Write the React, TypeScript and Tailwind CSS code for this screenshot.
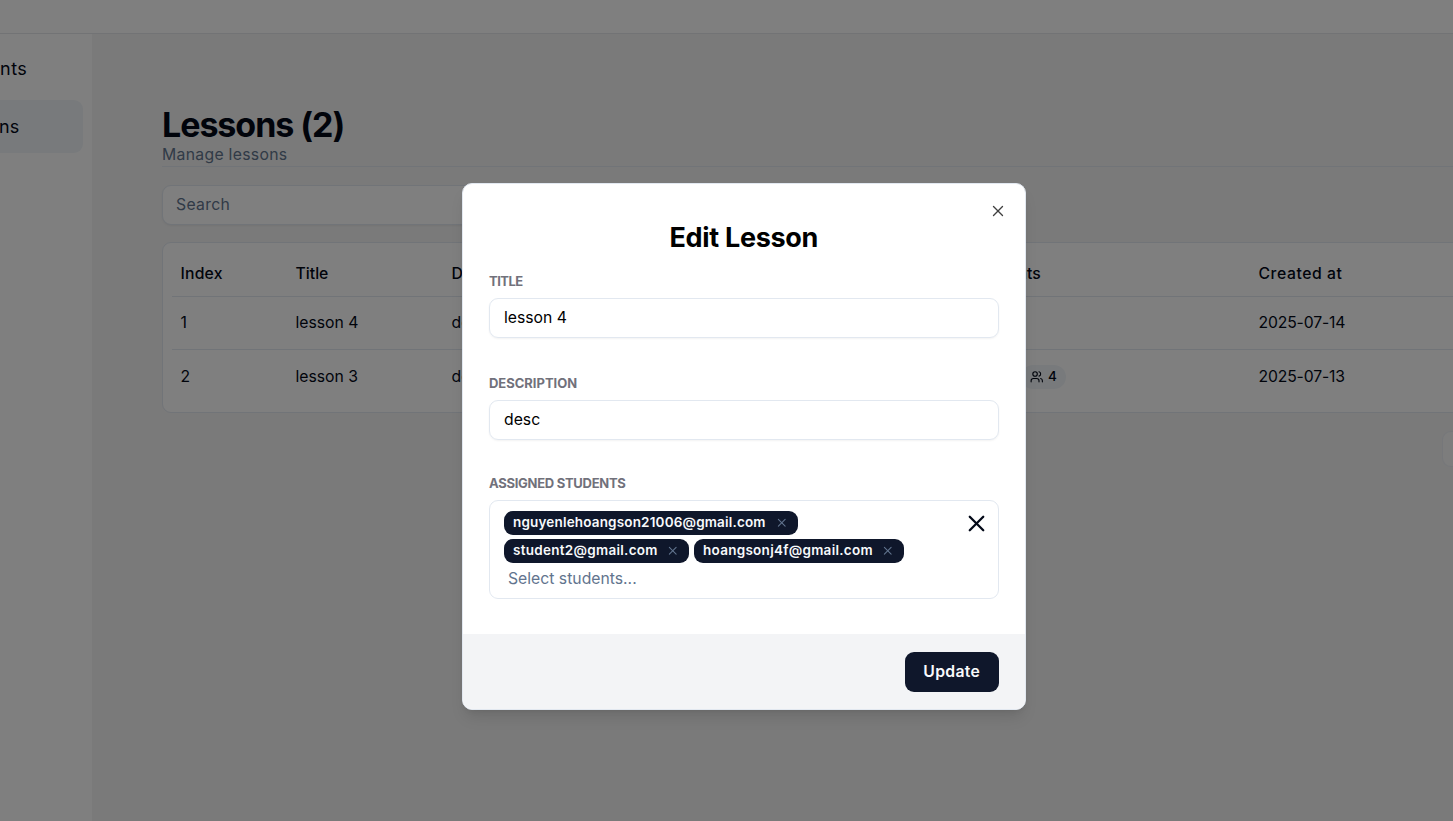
import { Users, X } from "lucide-react";

const columns = "grid grid-cols-[115px_156px_520px_287px_1fr] items-center pl-[8.5px]";

function Background() {
  return (
    <div className="flex h-full flex-col bg-white text-[#020817]">
      <header className="h-[34px] shrink-0 border-b border-gray-200 bg-white" />
      <div className="flex min-h-0 flex-1">
        <aside className="flex w-[92px] shrink-0 flex-col gap-[4.5px] bg-white pt-2 text-[18px]">
          <div className="flex h-[53px] w-[83px] items-center tracking-[0.5px]">nts</div>
          <div className="-ml-px flex h-[53px] w-[84px] items-center rounded-r-[9px] bg-slate-100">ns</div>
        </aside>
        <main className="min-w-0 flex-1 overflow-hidden bg-[#f4f4f4] pl-[70px] pt-[70px]">
          <div className="flex h-[63px] w-[1400px] flex-col border-b border-slate-200">
            <h1 className="h-[41px] text-[34px] font-bold leading-[41px] tracking-[-1.05px]">Lessons (2)</h1>
            <p className="text-[15.75px] leading-[20px] tracking-[0.3px] text-slate-500">Manage lessons</p>
          </div>
          <div className="mt-[18px] flex h-10 w-[422px] items-center rounded-[9px] border border-slate-200 bg-white pl-[13px] text-[15.75px] tracking-[0.3px] text-slate-500 shadow-xs">
            Search
          </div>
          <section className="mt-[17px] h-[171px] w-[1400px] rounded-[9px] border border-slate-200 bg-white px-[9px] pt-[9px] text-[15.75px]">
            <div className={`${columns} h-[45px] border-b border-slate-200 font-medium`}>
              <span className="tracking-[0.2px]">Index</span>
              <span>Title</span>
              <span>Desc</span>
              <span className="pl-[2px]">Students</span>
              <span className="tracking-[0.55px]">Created at</span>
            </div>
            <div className={`${columns} h-[53px] border-b border-slate-200`}>
              <span>1</span>
              <span>lesson 4</span>
              <span>desc</span>
              <span />
              <span className="tracking-[-0.15px]">2025-07-14</span>
            </div>
            <div className={`${columns} h-[54px]`}>
              <span>2</span>
              <span>lesson 3</span>
              <span>desc</span>
              <span className="flex pl-[49px]">
                <span className="flex h-6 items-center gap-[5px] rounded-full bg-slate-100 px-[9px] text-[13.5px] font-medium">
                  <Users size={13.5} />
                  <span className="-mt-px">4</span>
                </span>
              </span>
              <span className="tracking-[-0.15px]">2025-07-13</span>
            </div>
          </section>
          <div className="ml-[1280px] mt-[18px] h-[36px] w-24 rounded-[9px] border border-slate-200/60 bg-[#fafafa]" />
        </main>
      </div>
    </div>
  );
}

function Field({ label, value, labelClass }: { label: string; value: string; labelClass: string }) {
  return (
    <div className="flex h-[101.5px] flex-col">
      <label className={`h-[26px] text-[13px] font-bold leading-[18px] text-zinc-500 ${labelClass}`}>{label}</label>
      <div className="flex h-10 items-center rounded-[9px] border border-slate-200 pl-[14px] text-[15.75px] shadow-xs">
        {value}
      </div>
    </div>
  );
}

function Tag({ email, className }: { email: string; className: string }) {
  return (
    <span className={`flex h-6 items-center justify-between rounded-[9px] bg-slate-900 pl-[9px] pr-[10px] text-[13.5px] font-semibold text-slate-50 ${className}`}>
      {email}
      <X size={13.5} strokeWidth={1.9} className="text-slate-500" />
    </span>
  );
}

export default function App() {
  return (
    <div className="relative h-screen w-screen overflow-hidden font-[Inter,sans-serif]">
      <Background />
      <div className="absolute inset-0 bg-black/50" />
      <div
        role="dialog"
        className="absolute left-[462px] top-[183px] flex h-[527px] w-[564px] flex-col overflow-hidden rounded-[10px] border border-slate-200 bg-white text-black shadow-lg"
      >
        <button className="absolute right-[18px] top-[17.5px] opacity-75">
          <X size={18} strokeWidth={1.8} />
        </button>
        <div className="flex flex-1 flex-col pl-[26px] pr-[26.5px] pt-9">
          <h2 className="h-[52px] text-center text-[27px] font-bold leading-9 tracking-[-0.3px]">Edit Lesson</h2>
          <Field label="TITLE" value="lesson 4" labelClass="tracking-[-0.5px]" />
          <Field label="DESCRIPTION" value="desc" labelClass="tracking-[-0.02px]" />
          <div className="-mt-[0.6px] text-[13px] font-bold leading-[18px] tracking-[-0.28px] text-zinc-500">ASSIGNED STUDENTS</div>
          <div className="mt-[7.6px] flex h-[99px] justify-between rounded-[9px] border border-slate-200 pl-[14px] pr-[11px] pt-[9.5px]">
            <div className="flex flex-col items-start gap-1">
              <Tag email="nguyenlehoangson21006@gmail.com" className="w-[294px] tracking-[0.17px]" />
              <div className="flex gap-[5px]">
                <Tag email="student2@gmail.com" className="w-[185px] tracking-[0.28px]" />
                <Tag email="hoangsonj4f@gmail.com" className="w-[210px] tracking-[0.27px]" />
              </div>
              <span className="pl-1 text-[15.75px] leading-6 text-slate-500">Select students...</span>
            </div>
            <X size={27} className="-mr-[3px] -mt-[1px] text-[#020817]" strokeWidth={2} />
          </div>
        </div>
        <footer className="flex h-[75px] shrink-0 items-center justify-end bg-gray-100 pr-[26.5px]">
          <button className="h-10 w-[93.5px] rounded-[9px] bg-slate-900 text-[15.75px] font-semibold tracking-[0.3px] text-slate-50">
            Update
          </button>
        </footer>
      </div>
    </div>
  );
}
